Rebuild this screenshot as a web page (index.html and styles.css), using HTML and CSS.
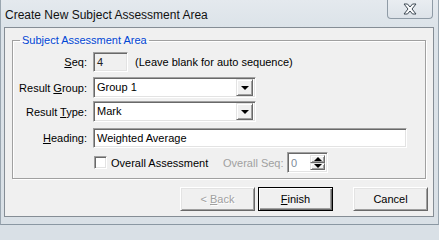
FILE: index.html
```html
<!DOCTYPE html>
<html>
<head>
<meta charset="utf-8">
<link rel="stylesheet" href="styles.css">
</head>
<body>
<div class="window">
  <div class="titlebar">
    <span class="title">Create New Subject Assessment Area</span>
    <div class="close">
      <svg width="14" height="12" viewBox="0 0 14 12"><polygon points="1,1 4.5,1 7,4 9.5,1 13,1 9,6 13,11 9.5,11 7,8 4.5,11 1,11 5,6" fill="#fbfcfd" stroke="#3d4853" stroke-width="1" stroke-linejoin="round"/></svg>
    </div>
  </div>
  <div class="client">
    <fieldset class="group">
      <legend>Subject Assessment Area</legend>
      <div class="row row-seq">
        <span class="lbl"><u>S</u>eq:</span>
        <div class="edit seq">4</div>
        <span class="hint">(Leave blank for auto sequence)</span>
      </div>
      <div class="row row-rgroup">
        <span class="lbl">Result <u>G</u>roup:</span>
        <div class="combo"><span class="combo-text">Group 1</span><span class="drop"><span class="tri-down"></span></span></div>
      </div>
      <div class="row row-rtype">
        <span class="lbl">Result <u>T</u>ype:</span>
        <div class="combo"><span class="combo-text">Mark</span><span class="drop"><span class="tri-down"></span></span></div>
      </div>
      <div class="row row-heading">
        <span class="lbl"><u>H</u>eading:</span>
        <div class="edit heading">Weighted Average</div>
      </div>
      <div class="row row-check">
        <span class="lbl"></span>
        <span class="check-wrap"><span class="checkbox"></span><span class="check-text">Overall Assessment</span></span>
        <span class="seq-lbl">Overall Seq:</span>
        <div class="spin"><span class="spin-text">0</span><span class="spin-btns"><span class="sbtn"><span class="tri-up"></span></span><span class="sbtn"><span class="tri-down"></span></span></span></div>
      </div>
    </fieldset>
    <div class="buttons">
      <button class="btn disabled">&lt; <u>B</u>ack</button>
      <button class="btn default"><u>F</u>inish</button>
      <button class="btn cancel">Cancel</button>
    </div>
  </div>
</div>
</body>
</html>
```
FILE: styles.css
```css
html, body {
  margin: 0;
  padding: 0;
  background: #d9e0e6;
}
body {
  width: 439px;
  height: 225px;
  overflow: hidden;
  font-family: "Liberation Sans", Arial, sans-serif;
  font-size: 11px;
  color: #000;
}
.window {
  width: 439px;
  height: 225px;
  box-sizing: border-box;
  display: flex;
  flex-direction: column;
  background: linear-gradient(180deg, #e4e9ee 0px, #dce3e9 27px, #d9e0e6 100%);
  border-left: 1px solid #9aa6b0;
  border-right: 1px solid #9aa6b0;
  border-bottom: 1px solid #8a97a2;
}
.titlebar {
  height: 27px;
  display: flex;
  align-items: flex-start;
  flex: none;
}
.title {
  margin: 8px 0 0 4px;
  font-size: 12px;
  line-height: 14px;
  color: #111;
}
.close {
  margin-left: auto;
  margin-right: 5px;
  width: 46px;
  height: 19px;
  box-sizing: border-box;
  border: 1px solid #8f9ba6;
  border-top: none;
  border-radius: 0 0 4px 4px;
  background: linear-gradient(180deg, #e9edf1, #dde3e9);
  display: flex;
  align-items: center;
  justify-content: center;
}
.close svg { display: block; margin-top: -1px; }
.client {
  margin: 0 4px 0 3px;
  width: 430px;
  height: 190px;
  flex: none;
  box-sizing: border-box;
  border: 1px solid #858d95;
  background: #f0f0f0;
}
.group {
  margin: 6px 0 0 7px;
  width: 414px;
  box-sizing: border-box;
  padding: 5px 0 5px 0;
  border: 1px solid #a0a0a0;
  box-shadow: inset 1px 1px 0 #fff, 1px 1px 0 #fff;
}
.group legend {
  margin-left: 7px;
  padding: 0 2px;
  line-height: 13px;
  color: #0046d5;
}
.row {
  display: flex;
  align-items: center;
}
.row-seq { height: 20px; }
.row-rgroup { height: 21px; margin-top: 5px; }
.row-rtype { height: 21px; margin-top: 3px; }
.row-heading { height: 20px; margin-top: 6px; }
.row-check { height: 21px; margin-top: 4px; }
.lbl {
  width: 74px;
  margin-right: 6px;
  text-align: right;
  flex: none;
}
.edit, .combo, .spin {
  box-sizing: border-box;
  border: 1px solid;
  border-color: #a0a0a0 #fff #fff #a0a0a0;
  box-shadow: inset 1px 1px 0 #696969, inset -1px -1px 0 #e3e3e3;
  background: #fff;
  flex: none;
}
.edit {
  height: 20px;
  line-height: 16px;
  padding: 1px 3px;
}
.seq {
  width: 35px;
  background: #f0f0f0;
  color: #222;
}
.hint { margin-left: 7px; }
.heading { width: 314px; }
.combo {
  width: 163px;
  height: 21px;
  display: flex;
  align-items: center;
  padding: 2px;
}
.combo-text {
  flex: 1;
  padding-left: 1px;
  line-height: 17px;
}
.drop, .sbtn {
  box-sizing: border-box;
  border: 1px solid;
  border-color: #e3e3e3 #696969 #696969 #e3e3e3;
  box-shadow: inset 1px 1px 0 #fff, inset -1px -1px 0 #a0a0a0;
  background: #f0f0f0;
  display: flex;
  align-items: center;
  justify-content: center;
}
.drop {
  width: 17px;
  height: 17px;
}
.tri-down {
  width: 0;
  height: 0;
  border-left: 4px solid transparent;
  border-right: 4px solid transparent;
  border-top: 4px solid #000;
}
.tri-up {
  width: 0;
  height: 0;
  border-left: 4px solid transparent;
  border-right: 4px solid transparent;
  border-bottom: 4px solid #000;
}
.check-wrap {
  width: 130px;
  display: flex;
  align-items: center;
  flex: none;
}
.checkbox {
  width: 13px;
  height: 13px;
  box-sizing: border-box;
  margin-left: 1px;
  border: 1px solid;
  border-color: #a0a0a0 #fff #fff #a0a0a0;
  box-shadow: inset 1px 1px 0 #696969, inset -1px -1px 0 #e3e3e3;
  background: #fff;
}
.check-text { margin-left: 4px; }
.seq-lbl {
  width: 64px;
  color: #a0a0a0;
  flex: none;
}
.spin {
  width: 41px;
  height: 21px;
  display: flex;
  padding: 2px;
}
.spin-text {
  flex: 1;
  line-height: 17px;
  padding-left: 1px;
  color: #7d8a99;
}
.spin-btns {
  width: 15px;
  display: flex;
  flex-direction: column;
}
.sbtn {
  flex: 1;
}
.buttons {
  display: flex;
  justify-content: flex-end;
  margin-top: 8px;
  padding-right: 5px;
}
.btn {
  width: 75px;
  height: 24px;
  box-sizing: border-box;
  margin: 0;
  padding: 0;
  font-family: inherit;
  font-size: 11px;
  color: #000;
  background: #f0f0f0;
  border: 1px solid;
  border-color: #fff #696969 #696969 #fff;
  box-shadow: inset 1px 1px 0 #e3e3e3, inset -1px -1px 0 #a0a0a0;
}
.btn.default {
  margin-left: 3px;
  border: 1px solid #000;
  box-shadow: inset 1px 1px 0 #fff, inset -1px -1px 0 #696969, inset -2px -2px 0 #a0a0a0;
}
.btn.cancel { margin-left: 20px; }
.btn.disabled {
  color: #a0a0a0;
  text-shadow: 1px 1px 0 #fff;
}
```
